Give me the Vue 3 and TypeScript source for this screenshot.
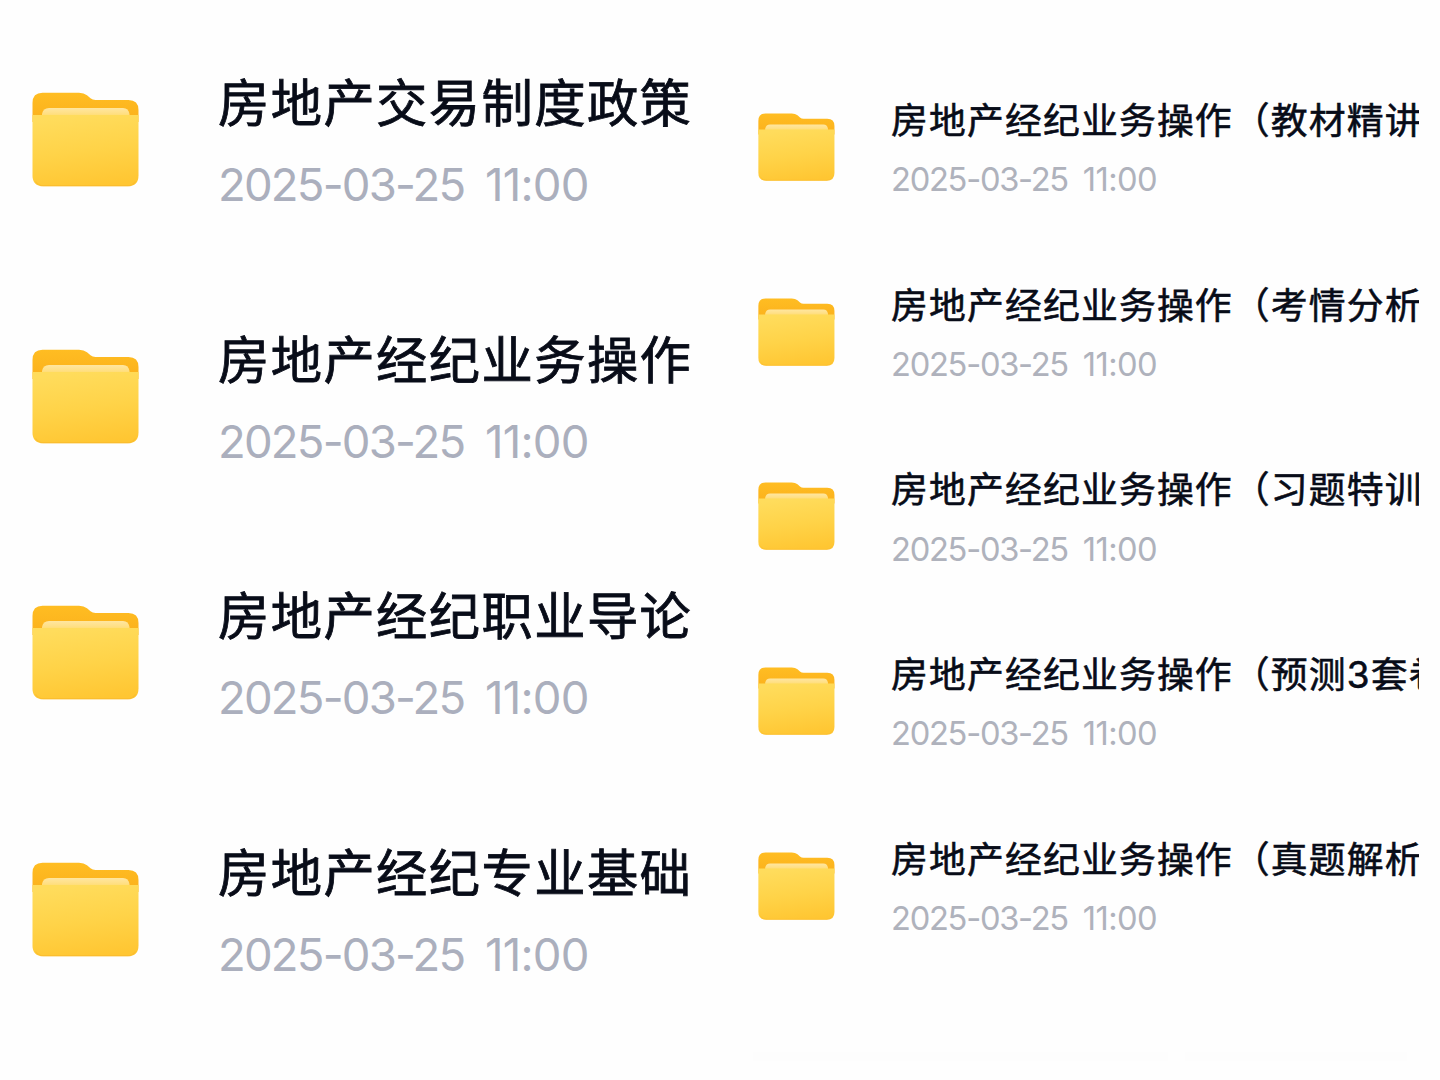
<script setup lang="ts">
interface Folder {
  name: string
  date: string
  time: string
}

const toFolders = (names: string[]): Folder[] =>
  names.map((name) => ({ name, date: '2025-03-25', time: '11:00' }))

const panels = [
  {
    id: 'large',
    folders: toFolders(['房地产交易制度政策', '房地产经纪业务操作', '房地产经纪职业导论', '房地产经纪专业基础']),
  },
  {
    id: 'small',
    folders: toFolders([
      '房地产经纪业务操作（教材精讲',
      '房地产经纪业务操作（考情分析',
      '房地产经纪业务操作（习题特训',
      '房地产经纪业务操作（预测3套卷',
      '房地产经纪业务操作（真题解析',
    ]),
  },
]
</script>

<template>
  <main class="screen">
    <svg class="defs" width="0" height="0" aria-hidden="true">
      <defs>
        <linearGradient id="back" x1="0" y1="0" x2="0" y2="1">
          <stop offset="0" stop-color="#ffbd22" />
          <stop offset="1" stop-color="#fbb01c" />
        </linearGradient>
        <linearGradient id="paper" x1="0" y1="0" x2="0" y2="1">
          <stop offset="0" stop-color="#ffe6a0" />
          <stop offset="0.5" stop-color="#ffe087" />
          <stop offset="1" stop-color="#ffda62" />
        </linearGradient>
        <linearGradient id="front" x1="0.4" y1="0" x2="0.6" y2="1">
          <stop offset="0" stop-color="#ffdc5c" />
          <stop offset="0.5" stop-color="#ffd348" />
          <stop offset="1" stop-color="#ffc632" />
        </linearGradient>
      </defs>
    </svg>
    <section v-for="panel in panels" :key="panel.id" class="panel" :class="panel.id">
      <article v-for="folder in panel.folders" :key="folder.name" class="row">
        <svg class="icon" viewBox="0 0 108 96" aria-hidden="true">
          <path fill="url(#back)" d="M.5 30V11Q.5.7 10.500.7H47Q52 .7 55 3.2L58.500 6.200Q60.500 7.900 63.500 7.900H96.500Q106.500 7.900 106.500 18V30Z" />
          <path fill="url(#paper)" d="M10 26V22Q11 16 17 16H91Q96.500 16 97.500 22V26Z" />
          <path fill="url(#front)" d="M.5 23H106.500V83.500Q106.500 94.300 95.700 94.300H11.300Q.5 94.300 .5 83.500Z" />
          <path fill="none" stroke="#f9b82c" stroke-width="1.200" opacity=".6" d="M3.500 89.500Q6.500 93.700 11.300 93.700H95.700Q100.500 93.700 103.500 89.500" />
        </svg>
        <div class="info">
          <h2 class="name">{{ folder.name }}</h2>
          <p class="meta"><span class="date">{{ folder.date }}</span><span class="time">{{ folder.time }}</span></p>
        </div>
      </article>
      <div v-if="panel.id === 'small'" class="footer"><i></i><i></i></div>
    </section>
  </main>
</template>

<style>
body {
  margin: 0;
  background: #fefefe;
}
</style>

<style scoped>
.screen {
  display: flex;
  width: 1440px;
  height: 1080px;
  overflow: hidden;
  background: #fefefe;
  font-family: Inter, 'Noto Sans CJK SC', sans-serif;
}
.defs {
  position: absolute;
}
.panel {
  box-sizing: border-box;
  overflow: hidden;
}
.large {
  --u: 1px;
  width: 726px;
  padding: 64px 0 0 32px;
}
.small {
  --u: 0.718px;
  width: 692.5px;
  padding: 93px 0 0 31.5px;
}
.row {
  display: flex;
  align-items: flex-start;
  height: calc(var(--u) * 256.6);
}
.small .row {
  height: 184.65px;
}
.icon {
  flex: none;
  width: calc(var(--u) * 108);
  height: calc(var(--u) * 96);
  margin-top: calc(var(--u) * 28);
}
.info {
  flex: none;
  margin-top: -1px;
  margin-left: calc(var(--u) * 78);
}
.name {
  margin: 0;
  font-size: calc(var(--u) * 51.3);
  font-weight: 400;
  line-height: calc(var(--u) * 80);
  letter-spacing: calc(var(--u) * 1.4);
  white-space: nowrap;
  color: #080c18;
  -webkit-text-stroke: calc(var(--u) * 0.8) #080c18;
}
.small .name {
  letter-spacing: 1.15px;
}
.meta {
  display: flex;
  margin: 0;
  font-size: calc(var(--u) * 45.5);
  font-weight: 400;
  line-height: calc(var(--u) * 83);
  white-space: nowrap;
  color: #abafbd;
}
.small .meta {
  margin-top: 1px;
  color: #afb2bc;
}
.date {
  width: calc(var(--u) * 267);
  letter-spacing: calc(var(--u) * -1.8);
}
.time {
  letter-spacing: calc(var(--u) * -0.8);
}
.footer {
  display: flex;
  gap: 17px;
  margin: 36px 0 0 -5px;
}
.footer i {
  width: 415px;
  height: 9px;
  background: #fdfdfd;
}
.footer i + i {
  width: 222px;
}
</style>
